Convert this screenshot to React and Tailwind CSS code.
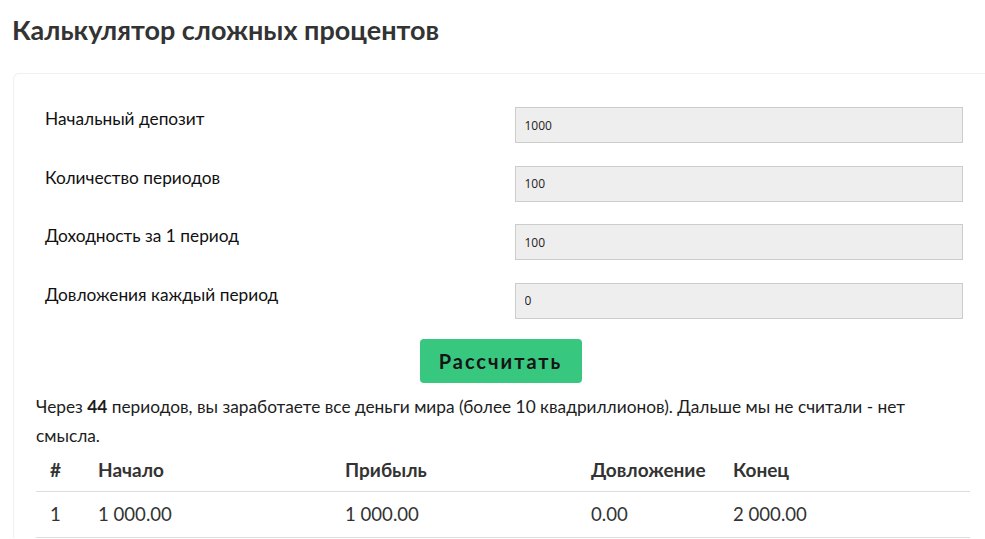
const fields = [
  { label: "Начальный депозит", value: "1000" },
  { label: "Количество периодов", value: "100" },
  { label: "Доходность за 1 период", value: "100" },
  { label: "Довложения каждый период", value: "0" },
];

const rows = [{ n: 1, start: "1 000.00", profit: "1 000.00", add: "0.00", end: "2 000.00" }];

function App() {
  return (
    <div className="min-h-[539px] w-[985px] overflow-hidden bg-white font-['Lato','Noto_Sans',sans-serif] text-[#222]">
      <h1 className="px-[12px] pt-[14px] text-[27px] font-bold leading-[32px] text-[#333]">
        Калькулятор сложных процентов
      </h1>

      <div className="mt-[27px] ml-[13px] w-[980px] rounded-tl-[6px] border-t border-l border-[#f0f0f0] px-[22px] pt-[33px]">
        <div className="space-y-[22.6px]">
          {fields.map((field) => (
            <div key={field.label} className="grid grid-cols-2">
              <label className="pl-[9px] text-[17.3px] leading-[24px] text-[#111]">{field.label}</label>
              <div className="pl-[11px] pr-[8px]">
                <input
                  readOnly
                  value={field.value}
                  className="h-[36px] w-full border border-[#ccc] bg-[#eee] px-[9px] font-['Open_Sans',sans-serif] text-[12px] text-[#222] outline-none"
                />
              </div>
            </div>
          ))}
        </div>

        <div className="mt-[20px] flex justify-center pr-[6px]">
          <button className="h-[44px] w-[162px] rounded-[4px] bg-[#38c77f] text-[20px] font-bold tracking-[2px] text-[#151515]">
            Рассчитать
          </button>
        </div>

        <p className="mt-[9px] text-[17.3px] leading-[29px] text-[#1d1d1d]">
          Через <span className="font-bold">44</span> периодов, вы заработаете все деньги мира (более 10 квадриллионов).
          Дальше мы не считали - нет смысла.
        </p>

        <table className="w-[934px] table-fixed border-collapse text-left text-[#333]">
          <thead>
            <tr className="border-b border-[#ddd]">
              <th className="h-[42px] w-[50px] pl-[14px] text-[19px] font-bold">#</th>
              <th className="w-[247px] px-[12px] text-[19px] font-bold">Начало</th>
              <th className="w-[246px] px-[12px] text-[19px] font-bold">Прибыль</th>
              <th className="w-[142px] px-[12px] text-[19px] font-bold">Довложение</th>
              <th className="w-[249px] px-[12px] text-[19px] font-bold">Конец</th>
            </tr>
          </thead>
          <tbody>
            {rows.map((row) => (
              <tr key={row.n} className="border-b border-[#ddd]">
                <td className="h-[46px] pl-[14px] text-[18.6px]">{row.n}</td>
                <td className="px-[12px] text-[18.6px]">{row.start}</td>
                <td className="px-[12px] text-[18.6px]">{row.profit}</td>
                <td className="px-[12px] text-[18.6px]">{row.add}</td>
                <td className="px-[12px] text-[18.6px]">{row.end}</td>
              </tr>
            ))}
          </tbody>
        </table>
      </div>
    </div>
  );
}

export default App;
